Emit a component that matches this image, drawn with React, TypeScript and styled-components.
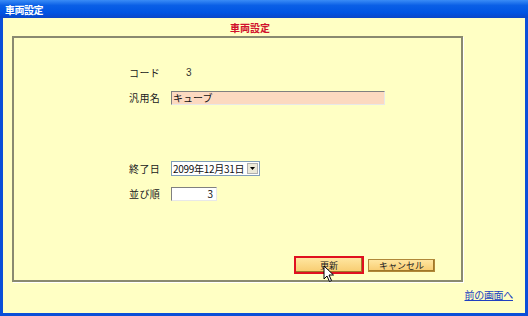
import React from 'react';
import styled, { createGlobalStyle } from 'styled-components';

const GlobalStyle = createGlobalStyle`
  body {
    margin: 0;
    font-family: "MS PGothic", "Noto Sans CJK JP", "Liberation Sans", sans-serif;
  }
`;

const Window = styled.div`
  width: 528px;
  height: 316px;
  box-sizing: border-box;
  display: flex;
  flex-direction: column;
  background: #ffffc4;
  border-left: 3px solid #0a4fd8;
  border-right: 3px solid #0a4fd8;
  border-bottom: 3px solid #0a4fd8;
`;

const TitleBar = styled.div`
  height: 18px;
  margin: 0 -3px;
  padding-left: 5px;
  display: flex;
  align-items: center;
  background: linear-gradient(180deg, #3a8cf6 0%, #0a5fe6 30%, #0054e3 70%, #0a46c8 100%);
  color: #fff;
  font-size: 10px;
  font-weight: bold;
  letter-spacing: -0.5px;
`;

const Heading = styled.div`
  height: 18px;
  display: flex;
  align-items: center;
  justify-content: center;
  padding-right: 28px;
  color: #d0102c;
  font-size: 10px;
  font-weight: bold;
`;

const Panel = styled.div`
  margin-left: 9px;
  width: 451px;
  height: 246px;
  box-sizing: border-box;
  border: 2px solid #8a8a70;
  box-shadow: 1px 1px 0 #ffffff;
  display: flex;
  flex-direction: column;
  padding: 22px 26px 6px 0;
`;

const Row = styled.div<{ $gap?: number }>`
  display: grid;
  grid-template-columns: 146px 1fr;
  column-gap: 11px;
  align-items: center;
  height: 25px;
  margin-top: ${(p) => p.$gap ?? 0}px;
`;

const Label = styled.div`
  text-align: right;
  font-size: 10px;
  letter-spacing: 0.3px;
  color: #202020;
`;

const Value = styled.div`
  font-size: 10px;
  color: #333;
  padding-left: 15px;
  font-family: "Liberation Sans", sans-serif;
`;

const TextBox = styled.div<{ $w: number; $bg: string; $right?: boolean }>`
  width: ${(p) => p.$w}px;
  height: 14px;
  box-sizing: border-box;
  background: ${(p) => p.$bg};
  border-top: 1px solid #808080;
  border-left: 1px solid #808080;
  border-right: 1px solid #e8e8e8;
  border-bottom: 1px solid #e8e8e8;
  font-size: 10px;
  line-height: 12px;
  padding: 0 3px 0 1px;
  text-align: ${(p) => (p.$right ? 'right' : 'left')};
  color: #111;
  white-space: nowrap;
`;

const Select = styled.div`
  width: 89px;
  height: 15px;
  box-sizing: border-box;
  background: #fff;
  border: 1px solid #7f9db9;
  display: flex;
  align-items: center;
  justify-content: space-between;
  font-size: 10px;
  letter-spacing: -0.3px;
  white-space: nowrap;
  color: #111;
  padding-left: 1px;
`;

const DropButton = styled.div`
  width: 11px;
  height: 11px;
  margin-right: 1px;
  background: #ece9d8;
  border: 1px solid #b0b0b0;
  box-sizing: border-box;
  display: flex;
  align-items: center;
  justify-content: center;
`;

const Buttons = styled.div`
  margin-top: auto;
  display: flex;
  justify-content: flex-end;
  align-items: center;
  gap: 4px;
`;

const Button = styled.div<{ $focused?: boolean }>`
  position: relative;
  width: ${(p) => (p.$focused ? 70 : 67)}px;
  height: ${(p) => (p.$focused ? 18 : 13)}px;
  box-sizing: border-box;
  display: flex;
  align-items: center;
  justify-content: center;
  font-size: 9px;
  color: #222;
  background: linear-gradient(180deg, #ffe6a0 0%, #f8cc70 100%);
  border: ${(p) => (p.$focused ? '2px solid #e01020' : '1px solid #b08838')};
  box-shadow: inset -1px -1px 0 #a07828;
`;

const Cursor = styled.svg`
  position: absolute;
  left: 27px;
  top: 7px;
`;

const Footer = styled.div`
  display: flex;
  justify-content: flex-end;
  padding: 5px 12px 0 0;
`;

const Link = styled.a`
  font-size: 10px;
  letter-spacing: -0.3px;
  color: #2040c0;
  text-decoration: underline;
`;

const App = () => (
  <>
    <GlobalStyle />
    <Window>
      <TitleBar>車両設定</TitleBar>
      <Heading>車両設定</Heading>
      <Panel>
        <Row>
          <Label>コード</Label>
          <Value>3</Value>
        </Row>
        <Row>
          <Label>汎用名</Label>
          <TextBox $w={214} $bg="#fcd9c0">キューブ</TextBox>
        </Row>
        <Row $gap={46}>
          <Label>終了日</Label>
          <Select>
            2099年12月31日
            <DropButton>
              <svg width="5" height="3" viewBox="0 0 5 3">
                <path d="M0 0h5L2.5 3z" fill="#000" />
              </svg>
            </DropButton>
          </Select>
        </Row>
        <Row>
          <Label>並び順</Label>
          <TextBox $w={46} $bg="#ffffff" $right>
            3
          </TextBox>
        </Row>
        <Buttons>
          <Button $focused>
            更新
            <Cursor width="12" height="18" viewBox="0 0 12 18">
              <path
                d="M1 1v13l3-3 2.5 5.5 2-1-2.5-5.5h4.5z"
                fill="#fff"
                stroke="#000"
                strokeWidth="1"
              />
            </Cursor>
          </Button>
          <Button>キャンセル</Button>
        </Buttons>
      </Panel>
      <Footer>
        <Link>前の画面へ</Link>
      </Footer>
    </Window>
  </>
);

export default App;
